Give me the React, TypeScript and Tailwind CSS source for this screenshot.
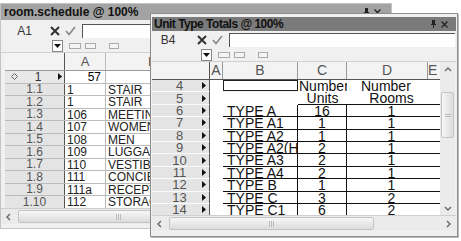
import React from "react"

const backRows = [
  ["1.1", "1", "STAIR"],
  ["1.2", "1", "STAIR"],
  ["1.3", "106", "MEETING"],
  ["1.4", "107", "WOMEN"],
  ["1.5", "108", "MEN"],
  ["1.6", "109", "LUGGAGE"],
  ["1.7", "110", "VESTIBULE"],
  ["1.8", "111", "CONCIERGE"],
  ["1.9", "111a", "RECEPTION"],
  ["1.10", "112", "STORAGE"],
]

const frontRows = [
  ["6", "TYPE A", "16", "1"],
  ["7", "TYPE A1", "1", "1"],
  ["8", "TYPE A2", "1", "1"],
  ["9", "TYPE A2(H", "2", "1"],
  ["10", "TYPE A3", "2", "1"],
  ["11", "TYPE A4", "2", "1"],
  ["12", "TYPE B", "1", "1"],
  ["13", "TYPE C", "3", "2"],
  ["14", "TYPE C1", "6", "2"],
]

function Arrow() {
  return (
    <svg width="4" height="7" viewBox="0 0 4 7" className="shrink-0">
      <path d="M0 0 L4 3.5 L0 7 Z" fill="#111" />
    </svg>
  )
}

function Chevron({ dir }: { dir: "l" | "r" | "u" | "d" }) {
  const d = {
    l: "M6 2 L3 5 L6 8",
    r: "M4 2 L7 5 L4 8",
    u: "M2 6 L5 3 L8 6",
    d: "M2 4 L5 7 L8 4",
  }[dir]
  return (
    <svg width="10" height="10" viewBox="0 0 10 10">
      <path d={d} fill="none" stroke="#666" strokeWidth="1.4" />
    </svg>
  )
}

function PinClose() {
  return (
    <div className="flex items-center gap-[5px]">
      <svg width="5" height="8" viewBox="0 0 5 8">
        <path d="M1 0 H4 V4 H5 V5 H3 V8 H2 V5 H0 V4 H1 Z" fill="#222" />
      </svg>
      <svg width="7" height="7" viewBox="0 0 7 7">
        <path d="M0.5 0.5 L6.5 6.5 M6.5 0.5 L0.5 6.5" stroke="#222" strokeWidth="1.3" />
      </svg>
    </div>
  )
}

function FormulaBar({ cell, labelW, xGap }: { cell: string; labelW: string; xGap: string }) {
  return (
    <div className="flex h-full items-center">
      <div className={`${labelW} text-center text-[12px] text-[#333]`}>{cell}</div>
      <svg width="10" height="10" viewBox="0 0 10 10" className={xGap}>
        <path d="M1 1 L9 9 M9 1 L1 9" stroke="#333" strokeWidth="2" />
      </svg>
      <svg width="11" height="10" viewBox="0 0 11 10" className="ml-[5px]">
        <path d="M1 5 L4 8.5 L10 1" fill="none" stroke="#888" strokeWidth="1.6" />
      </svg>
      <div className="ml-[6px] h-[14px] flex-1 border-l border-t border-[#555] border-b-[#ddd] border-r-[#ddd] bg-white" />
    </div>
  )
}

function ToolIcons() {
  return (
    <div className="flex items-center">
      <div className="flex h-[12px] w-[11px] items-center justify-center border border-[#888] bg-white">
        <svg width="7" height="4" viewBox="0 0 7 4">
          <path d="M0 0 L7 0 L3.5 4 Z" fill="#111" />
        </svg>
      </div>
      <div className="ml-[6px] flex items-center gap-[4px]">
        <div className="h-[6px] w-[12px] border border-[#aaa] bg-[#f4f4f4]" />
        <div className="h-[6px] w-[11px] border border-[#aaa] bg-[#f4f4f4]" />
        <div className="ml-[9px] h-[6px] w-[10px] border border-[#aaa] bg-[#f4f4f4]" />
      </div>
    </div>
  )
}

function HScroll({ thumbW, right }: { thumbW: string; right?: boolean }) {
  return (
    <div className="flex h-full items-center border-t border-[#cfcfcf] bg-[#ebebeb]">
      <div className="flex h-[14px] w-[15px] items-center justify-center">
        <Chevron dir="l" />
      </div>
      <div className={`${thumbW} ml-[2px] flex h-[13px] items-center justify-center rounded-[2px] border border-[#c4c4c4] bg-gradient-to-b from-[#f7f7f7] to-[#dcdcdc]`}>
        <div className="flex gap-[1px]">
          <div className="h-[6px] w-[1px] bg-[#bbb]" />
          <div className="h-[6px] w-[1px] bg-[#bbb]" />
          <div className="h-[6px] w-[1px] bg-[#bbb]" />
        </div>
      </div>
      <div className="flex-1" />
      {right && (
        <div className="mr-[1px] flex h-[14px] w-[15px] items-center justify-center">
          <Chevron dir="r" />
        </div>
      )}
    </div>
  )
}

function BackWindow() {
  return (
    <div className="absolute left-0 top-[3px] flex h-[226px] w-[392px] flex-col border border-[#c4c4c4] bg-[#f0f0f0]">
      <div className="flex h-[16px] shrink-0 items-center justify-between bg-[#a3a3a3] pl-[3px] pr-[10px]">
        <span className="text-[12px] font-bold leading-none text-[#111]">room.schedule @ 100%</span>
        <PinClose />
      </div>
      <div className="h-[19px] shrink-0 pt-[2px]">
        <FormulaBar cell="A1" labelW="w-[47px]" xGap="ml-[2px]" />
      </div>
      <div className="flex h-[14px] shrink-0 items-center border-b border-[#d0d0d0] pl-[51px]">
        <ToolIcons />
      </div>
      <div className="h-[155px] shrink-0 overflow-hidden pl-[4px]">
        <div className="flex h-[18px] border-b border-[#9a9a9a] bg-[#f3f3f3] text-[13px] text-[#555]">
          <div className="w-[60px] border-r border-[#555]" />
          <div className="flex w-[41px] items-center justify-center border-r border-[#bbb]">A</div>
          <div className="flex w-[60px] items-center pl-[42px]">B</div>
        </div>
        <div className="flex h-[12.5px] items-center border-b border-[#bbb]">
          <div className="flex h-full w-[60px] items-center border-r border-[#555] bg-[#e8e8e8] pl-[6px] pr-[2px] text-[12px] text-[#333]">
            <svg width="7" height="7" viewBox="0 0 7 7">
              <path d="M3.5 0.5 L6.5 3.5 L3.5 6.5 L0.5 3.5 Z" fill="none" stroke="#666" />
            </svg>
            <span className="flex-1 text-center leading-none">1</span>
            <Arrow />
          </div>
          <div className="w-[41px] border-r border-[#bbb] bg-white pr-[4px] text-right text-[12px] leading-none">57</div>
          <div className="h-full flex-1 bg-white" />
        </div>
        {backRows.map(([n, a, b]) => (
          <div key={n} className="flex h-[12.5px] border-b border-[#bbb] text-[12px] leading-[12px]">
            <div className="flex h-full w-[60px] items-center justify-center border-r border-[#555] bg-[#e4e4e4] text-[#555]">{n}</div>
            <div className="w-[41px] border-r border-[#bbb] bg-white pl-[2px] text-[#222]">{a}</div>
            <div className="flex-1 overflow-hidden whitespace-nowrap bg-white pl-[2px] text-[#222]">{b}</div>
          </div>
        ))}
      </div>
      <div className="h-[16px] shrink-0">
        <HScroll thumbW="w-[200px]" />
      </div>
      <div className="flex-1" />
    </div>
  )
}

function FrontWindow() {
  return (
    <div className="absolute left-[150px] top-[13px] flex h-[224px] w-[308px] flex-col border border-[#8c8c8c] bg-[#f0f0f0] px-[1px] shadow-[1px_1px_0_#bbb]">
      <div className="h-[3px] shrink-0" />
      <div className="flex h-[14px] shrink-0 items-center justify-between bg-[#7b7b7b] pl-[2px] pr-[8px]">
        <span className="text-[12px] font-bold leading-none tracking-[-0.5px] text-[#111]">Unit Type Totals @ 100%</span>
        <PinClose />
      </div>
      <div className="h-[17px] shrink-0 pt-[1px] pr-[1px]">
        <FormulaBar cell="B4" labelW="w-[32px]" xGap="ml-[13px]" />
      </div>
      <div className="flex h-[14px] shrink-0 items-center border-b border-[#d0d0d0] pl-[49px]">
        <ToolIcons />
      </div>
      <div className="flex h-[153px] shrink-0">
        <div className="w-[288px] overflow-hidden">
          <div className="flex h-[18px] border-b border-[#555] bg-[#f3f3f3] text-[14px] text-[#555]">
            <div className="w-[58px] border-r border-[#555]" />
            <div className="flex w-[13px] items-center justify-center border-r border-[#999]">A</div>
            <div className="flex w-[75px] items-center justify-center border-r border-[#999]">B</div>
            <div className="flex w-[49px] items-center justify-center border-r border-[#999]">C</div>
            <div className="flex w-[81px] items-center justify-center border-r border-[#999]">D</div>
            <div className="flex w-[12px] items-center">E</div>
          </div>
          <div className="flex h-[12.4px] text-[14px] leading-[12.4px] text-[#111]">
            <RowHead n="4" />
            <div className="w-[13px] bg-white" />
            <div className="h-[11px] w-[75px] border border-[#222] bg-white" />
            <div className="w-[49px] whitespace-nowrap bg-white pl-[1px]">Number</div>
            <div className="w-[81px] bg-white pl-[14px]">Number</div>
            <div className="flex-1 bg-white" />
          </div>
          <div className="flex h-[12.4px] text-[14px] leading-[12.4px] text-[#111]">
            <RowHead n="5" />
            <div className="w-[13px] bg-white" />
            <div className="w-[75px] bg-white" />
            <div className="w-[49px] border-b border-[#111] bg-white text-center">Units</div>
            <div className="w-[81px] border-b border-[#111] bg-white pl-[8px] text-center">Rooms</div>
            <div className="flex-1 border-b border-[#111] bg-white" />
          </div>
          {frontRows.map(([n, b, c, d]) => (
            <div key={n} className="flex h-[12.4px] text-[14px] leading-[12.4px] text-[#111]">
              <RowHead n={n} />
              <div className="w-[13px] bg-white" />
              <div className="w-[75px] whitespace-nowrap border-b border-r border-[#111] bg-white pl-[4px]">{b}</div>
              <div className="w-[49px] border-b border-r border-[#111] bg-white text-center">{c}</div>
              <div className="w-[81px] border-b border-[#111] bg-white pl-[8px] text-center">{d}</div>
              <div className="flex-1 border-b border-[#111] bg-white" />
            </div>
          ))}
        </div>
        <div className="flex w-[15px] flex-col items-center bg-[#ebebeb]">
          <div className="flex h-[16px] items-center">
            <Chevron dir="u" />
          </div>
          <div className="mt-[14px] flex h-[46px] w-[13px] items-center justify-center rounded-[2px] border border-[#c4c4c4] bg-gradient-to-r from-[#f7f7f7] to-[#dcdcdc]">
            <div className="flex flex-col gap-[1px]">
              <div className="h-[1px] w-[6px] bg-[#bbb]" />
              <div className="h-[1px] w-[6px] bg-[#bbb]" />
            </div>
          </div>
          <div className="flex-1" />
          <div className="mb-[1px] flex h-[12px] items-center">
            <Chevron dir="d" />
          </div>
        </div>
      </div>
      <div className="h-[16px] shrink-0">
        <HScroll thumbW="w-[205px]" right />
      </div>
      <div className="flex-1" />
    </div>
  )
}

function RowHead({ n }: { n: string }) {
  return (
    <div className="flex h-full w-[58px] shrink-0 items-center border-b border-r border-b-[#fafafa] border-r-[#555] bg-[#e4e4e4] pr-[3px] text-[13px] leading-none text-[#555]">
      <span className="flex-1 pl-[5px] text-center">{n}</span>
      <Arrow />
    </div>
  )
}

export default function App() {
  return (
    <div className="relative h-[241px] w-[461px] overflow-hidden bg-white font-['Liberation_Sans',Arial,sans-serif]">
      <BackWindow />
      <FrontWindow />
    </div>
  )
}
